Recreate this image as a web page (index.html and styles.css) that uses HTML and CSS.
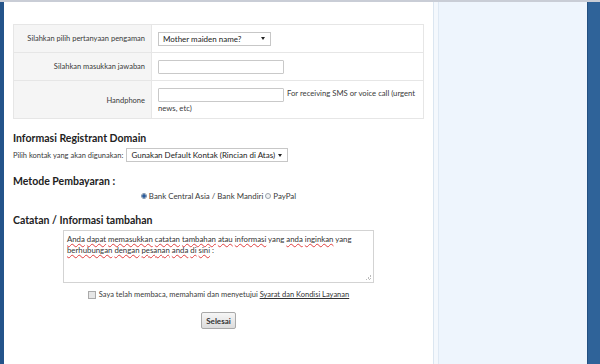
FILE: index.html
```html
<!DOCTYPE html>
<html lang="id">
<head>
  <meta charset="UTF-8" />
  <title>Checkout</title>
  <link rel="stylesheet" href="styles.css">
</head>
<body>
  <div class="page">
    <div class="edge-left"></div>
    <div class="main">
      <table class="secure">
        <tr>
          <td class="label">Silahkan pilih pertanyaan pengaman</td>
          <td class="field">
            <div class="select q-select"><span>Mother maiden name?</span><i class="caret"></i></div>
          </td>
        </tr>
        <tr>
          <td class="label">Silahkan masukkan jawaban</td>
          <td class="field"><input type="text" class="text-in"></td>
        </tr>
        <tr class="tall">
          <td class="label">Handphone</td>
          <td class="field"><input type="text" class="text-in"> For receiving SMS or voice call (urgent news, etc)</td>
        </tr>
      </table>

      <h3>Informasi Registrant Domain</h3>
      <div class="contact">
        <span class="small">Pilih kontak yang akan digunakan:</span>
        <div class="select c-select"><span>Gunakan Default Kontak (Rincian di Atas)</span><i class="caret"></i></div>
      </div>

      <h3>Metode Pembayaran :</h3>
      <div class="payment">
        <span class="radio checked"></span><span>Bank Central Asia / Bank Mandiri</span>
        <span class="radio"></span><span>PayPal</span>
      </div>

      <h3>Catatan / Informasi tambahan</h3>
      <div class="notes">
        <div class="textarea"><span class="sp">Anda</span> <span class="sp">dapat</span> <span class="sp">memasukkan</span> <span class="sp">catatan</span> <span class="sp">tambahan</span> <span class="sp">atau</span> <span class="sp">informasi</span> yang <span class="sp">anda</span> <span class="sp">inginkan</span> yang <span class="sp">berhubungan</span> <span class="sp">dengan</span> <span class="sp">pesanan</span> <span class="sp">anda</span> <span class="sp">di</span> <span class="sp">sini</span> :<i class="grip"></i></div>
      </div>

      <div class="agree">
        <span class="checkbox"></span>
        <span>Saya telah membaca, memahami dan menyetujui <a href="#">Syarat dan Kondisi Layanan</a></span>
      </div>

      <div class="submit">
        <button>Selesai</button>
      </div>
    </div>
    <div class="sidebar"></div>
    <div class="edge-right"></div>
  </div>
</body>
</html>
```

FILE: styles.css
```css
body {
  margin: 0;
  font-family: Lato, "Open Sans", sans-serif;
  font-size: 7.5px;
  color: #333;
  background: #fff;
}
.page {
  display: flex;
  height: 364px;
  border-top: 2px solid #c9cdd6;
  box-sizing: border-box;
}
.edge-left {
  width: 4px;
  background: #24548a;
}
.main {
  width: 429px;
  padding: 22px 9px 0;
  box-sizing: border-box;
}
.sidebar {
  width: 153px;
  background: #eef5fd;
  border-left: 1px solid #dbe6f1;
  box-shadow: inset 4px 0 0 #f4f8fd, inset 5px 0 0 #dfe9f4;
}
.edge-right {
  flex: 1;
  background: #2f6399;
  border-left: 1px solid #234f80;
}
.secure {
  width: 100%;
  border-collapse: collapse;
  border: 1px solid #e6e6e6;
}
.secure td {
  border-top: 1px solid #e6e6e6;
  height: 27px;
  padding: 0 6px;
}
.secure .label {
  width: 125px;
  background: #f5f5f5;
  text-align: right;
  color: #3a3a3a;
  white-space: nowrap;
  border-right: 1px solid #e6e6e6;
}
.secure .field {
  color: #3a3a3a;
  font-size: 7.7px;
  line-height: 12px;
}
.secure .tall td {
  height: 35px;
  padding-top: 2px;
}
.text-in {
  width: 126px;
  height: 14px;
  box-sizing: border-box;
  border: 1px solid #c9c9c9;
  border-radius: 1px;
  margin: 0 1px 0 0;
  vertical-align: middle;
}
.select {
  display: inline-flex;
  align-items: center;
  justify-content: space-between;
  height: 14px;
  box-sizing: border-box;
  border: 1px solid #c7c7c7;
  background: #fff;
  padding: 0 5px 0 4px;
  color: #222;
  font-size: 8px;
  white-space: nowrap;
  vertical-align: middle;
}
.q-select {
  width: 113px;
}
.c-select {
  width: 162px;
}
.caret {
  width: 0;
  height: 0;
  border-left: 2.5px solid transparent;
  border-right: 2.5px solid transparent;
  border-top: 3px solid #222;
}
h3 {
  font-size: 10.5px;
  font-weight: bold;
  color: #222;
  margin: 13px 0 4px;
}
.contact {
  display: flex;
  align-items: center;
  gap: 3px;
}
.small {
  font-size: 7.5px;
  color: #3a3a3a;
}
.payment {
  display: flex;
  justify-content: center;
  align-items: center;
  gap: 2px;
  font-size: 7.9px;
  color: #3a3a3a;
  margin-top: 3px;
}
.radio {
  width: 6px;
  height: 6px;
  border-radius: 50%;
  border: 1px solid #9aa3ad;
  background: #f2f2f2;
  box-sizing: border-box;
}
.radio.checked {
  background: radial-gradient(circle, #2a5b9c 0 1.5px, #e8eef5 2px);
  border-color: #7a8ea6;
}
.notes {
  display: flex;
  justify-content: center;
}
.textarea {
  position: relative;
  width: 311px;
  height: 53px;
  box-sizing: border-box;
  border: 1px solid #d3d3d3;
  padding: 3px 3px;
  color: #333;
  font-size: 7.8px;
  line-height: 11px;
}
.sp {
  text-decoration: underline wavy #e04040;
  text-decoration-thickness: 0.5px;
}
.grip {
  position: absolute;
  right: 2px;
  bottom: 2px;
  width: 5px;
  height: 5px;
  background: linear-gradient(135deg, transparent 50%, #bbb 50%, #bbb 60%, transparent 60%, transparent 75%, #bbb 75%, #bbb 85%, transparent 85%);
}
.agree {
  display: flex;
  justify-content: center;
  align-items: center;
  gap: 3px;
  margin-top: 7px;
  color: #3a3a3a;
}
.agree a {
  color: #333;
}
.checkbox {
  width: 8px;
  height: 8px;
  border: 1px solid #aaa;
  background: #e6e6e6;
  box-sizing: border-box;
}
.submit {
  display: flex;
  justify-content: center;
  margin-top: 13px;
}
button {
  font-family: inherit;
  font-size: 8px;
  font-weight: bold;
  color: #333;
  height: 17px;
  padding: 0 4px;
  border: 1px solid #a9a9a9;
  border-radius: 2px;
  background: linear-gradient(#f6f6f6, #dcdcdc);
}
```
